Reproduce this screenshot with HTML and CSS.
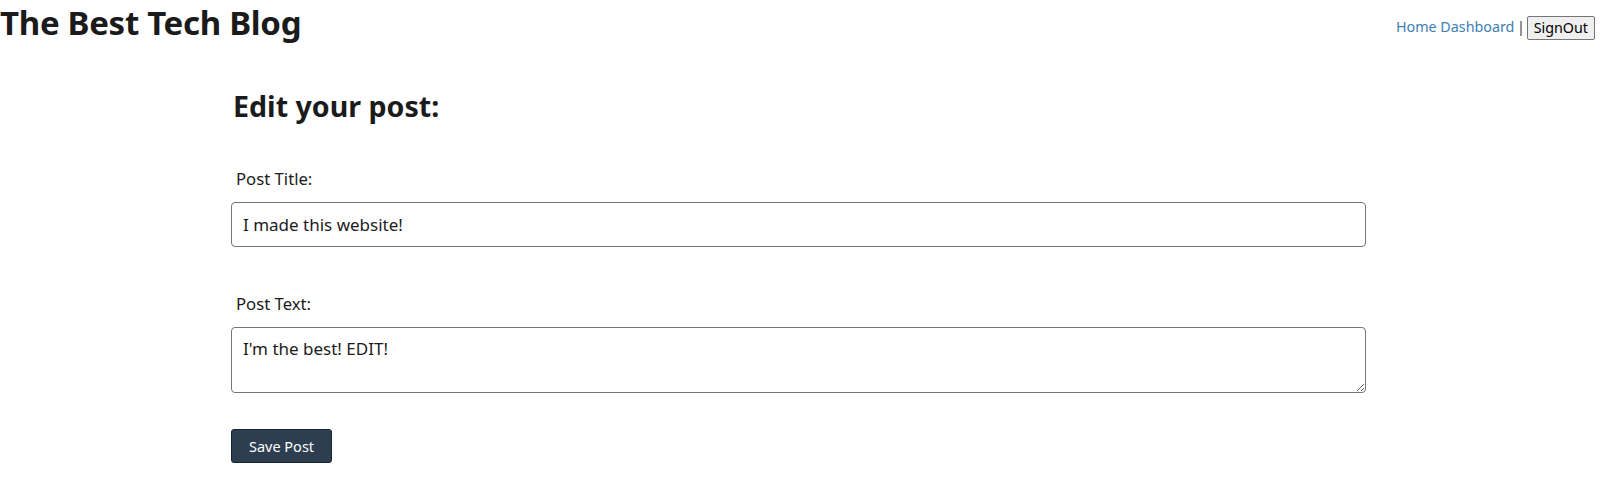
FILE: index.html
```html
<!DOCTYPE html>
<html lang="en">
<head>
<meta charset="utf-8">
<title>The Best Tech Blog</title>
<link rel="stylesheet" href="styles.css">
</head>
<body>
<header class="site-header">
  <h1 class="site-title">The Best Tech Blog</h1>
  <nav class="site-nav">
    <a href="#" class="nav-link">Home</a>
    <a href="#" class="nav-link">Dashboard</a>
    <span class="nav-sep">|</span>
    <button class="signout">SignOut</button>
  </nav>
</header>
<main class="editor">
  <h2 class="editor-title">Edit your post:</h2>
  <form class="post-form">
    <div class="field">
      <label class="field-label" for="title">Post Title:</label>
      <input class="field-input" id="title" type="text" value="I made this website!">
    </div>
    <div class="field">
      <label class="field-label" for="text">Post Text:</label>
      <textarea class="field-textarea" id="text">I'm the best! EDIT!</textarea>
    </div>
    <button type="button" class="save-btn">Save Post</button>
  </form>
</main>
</body>
</html>
```
FILE: styles.css
```css
* { box-sizing: border-box; }
html, body { margin: 0; padding: 0; background: #fff; }
body {
  font-family: "Noto Sans", "Open Sans", sans-serif;
  color: #1b1b1b;
}
.site-header {
  display: flex;
  justify-content: space-between;
  align-items: flex-start;
}
.site-title {
  margin: 0;
  font-size: 33px;
  font-weight: 700;
  line-height: 46px;
  letter-spacing: -0.3px;
}
.site-nav {
  padding-top: 15px;
  padding-right: 5px;
  font-size: 14.3px;
  line-height: 24px;
  white-space: nowrap;
}
.nav-link { color: #3d7eb0; text-decoration: none; }
.nav-sep { color: #333; margin: 0 -2px 0 -1px; }
.signout {
  font-family: inherit;
  font-size: 14.3px;
  color: #000;
  background: #efefef;
  border: 1px solid #767676;
  border-radius: 2px;
  padding: 0 6px;
  height: 24px;
  line-height: 20px;
  vertical-align: middle;
}
.editor {
  width: 1135px;
  margin: 0 0 0 231px;
}
.editor-title {
  margin: 40px 0 0 2px;
  font-size: 28.6px;
  font-weight: 700;
  line-height: 40px;
}
.post-form {
  display: flex;
  flex-direction: column;
  align-items: flex-start;
}
.field {
  width: 100%;
  display: flex;
  flex-direction: column;
}
.field-label {
  margin: 41px 0 0 5px;
  font-size: 16.7px;
  line-height: 24px;
}
.field-input, .field-textarea {
  width: 100%;
  margin-top: 11px;
  border: 1px solid #767676;
  border-radius: 4px;
  font-family: inherit;
  font-size: 17px;
  color: #1b1b1b;
  padding: 0 11px;
}
.field-input { height: 45px; }
.field-textarea {
  height: 66px;
  padding-top: 9px;
  line-height: 24px;
  resize: vertical;
}
.field + .field .field-label { margin-top: 45px; }
.save-btn {
  margin-top: 36px;
  width: 101px;
  height: 34px;
  background: #2c3e50;
  color: #fff;
  border: 1px solid #1a2533;
  border-radius: 3px;
  font-family: inherit;
  font-size: 14.5px;
}
```
